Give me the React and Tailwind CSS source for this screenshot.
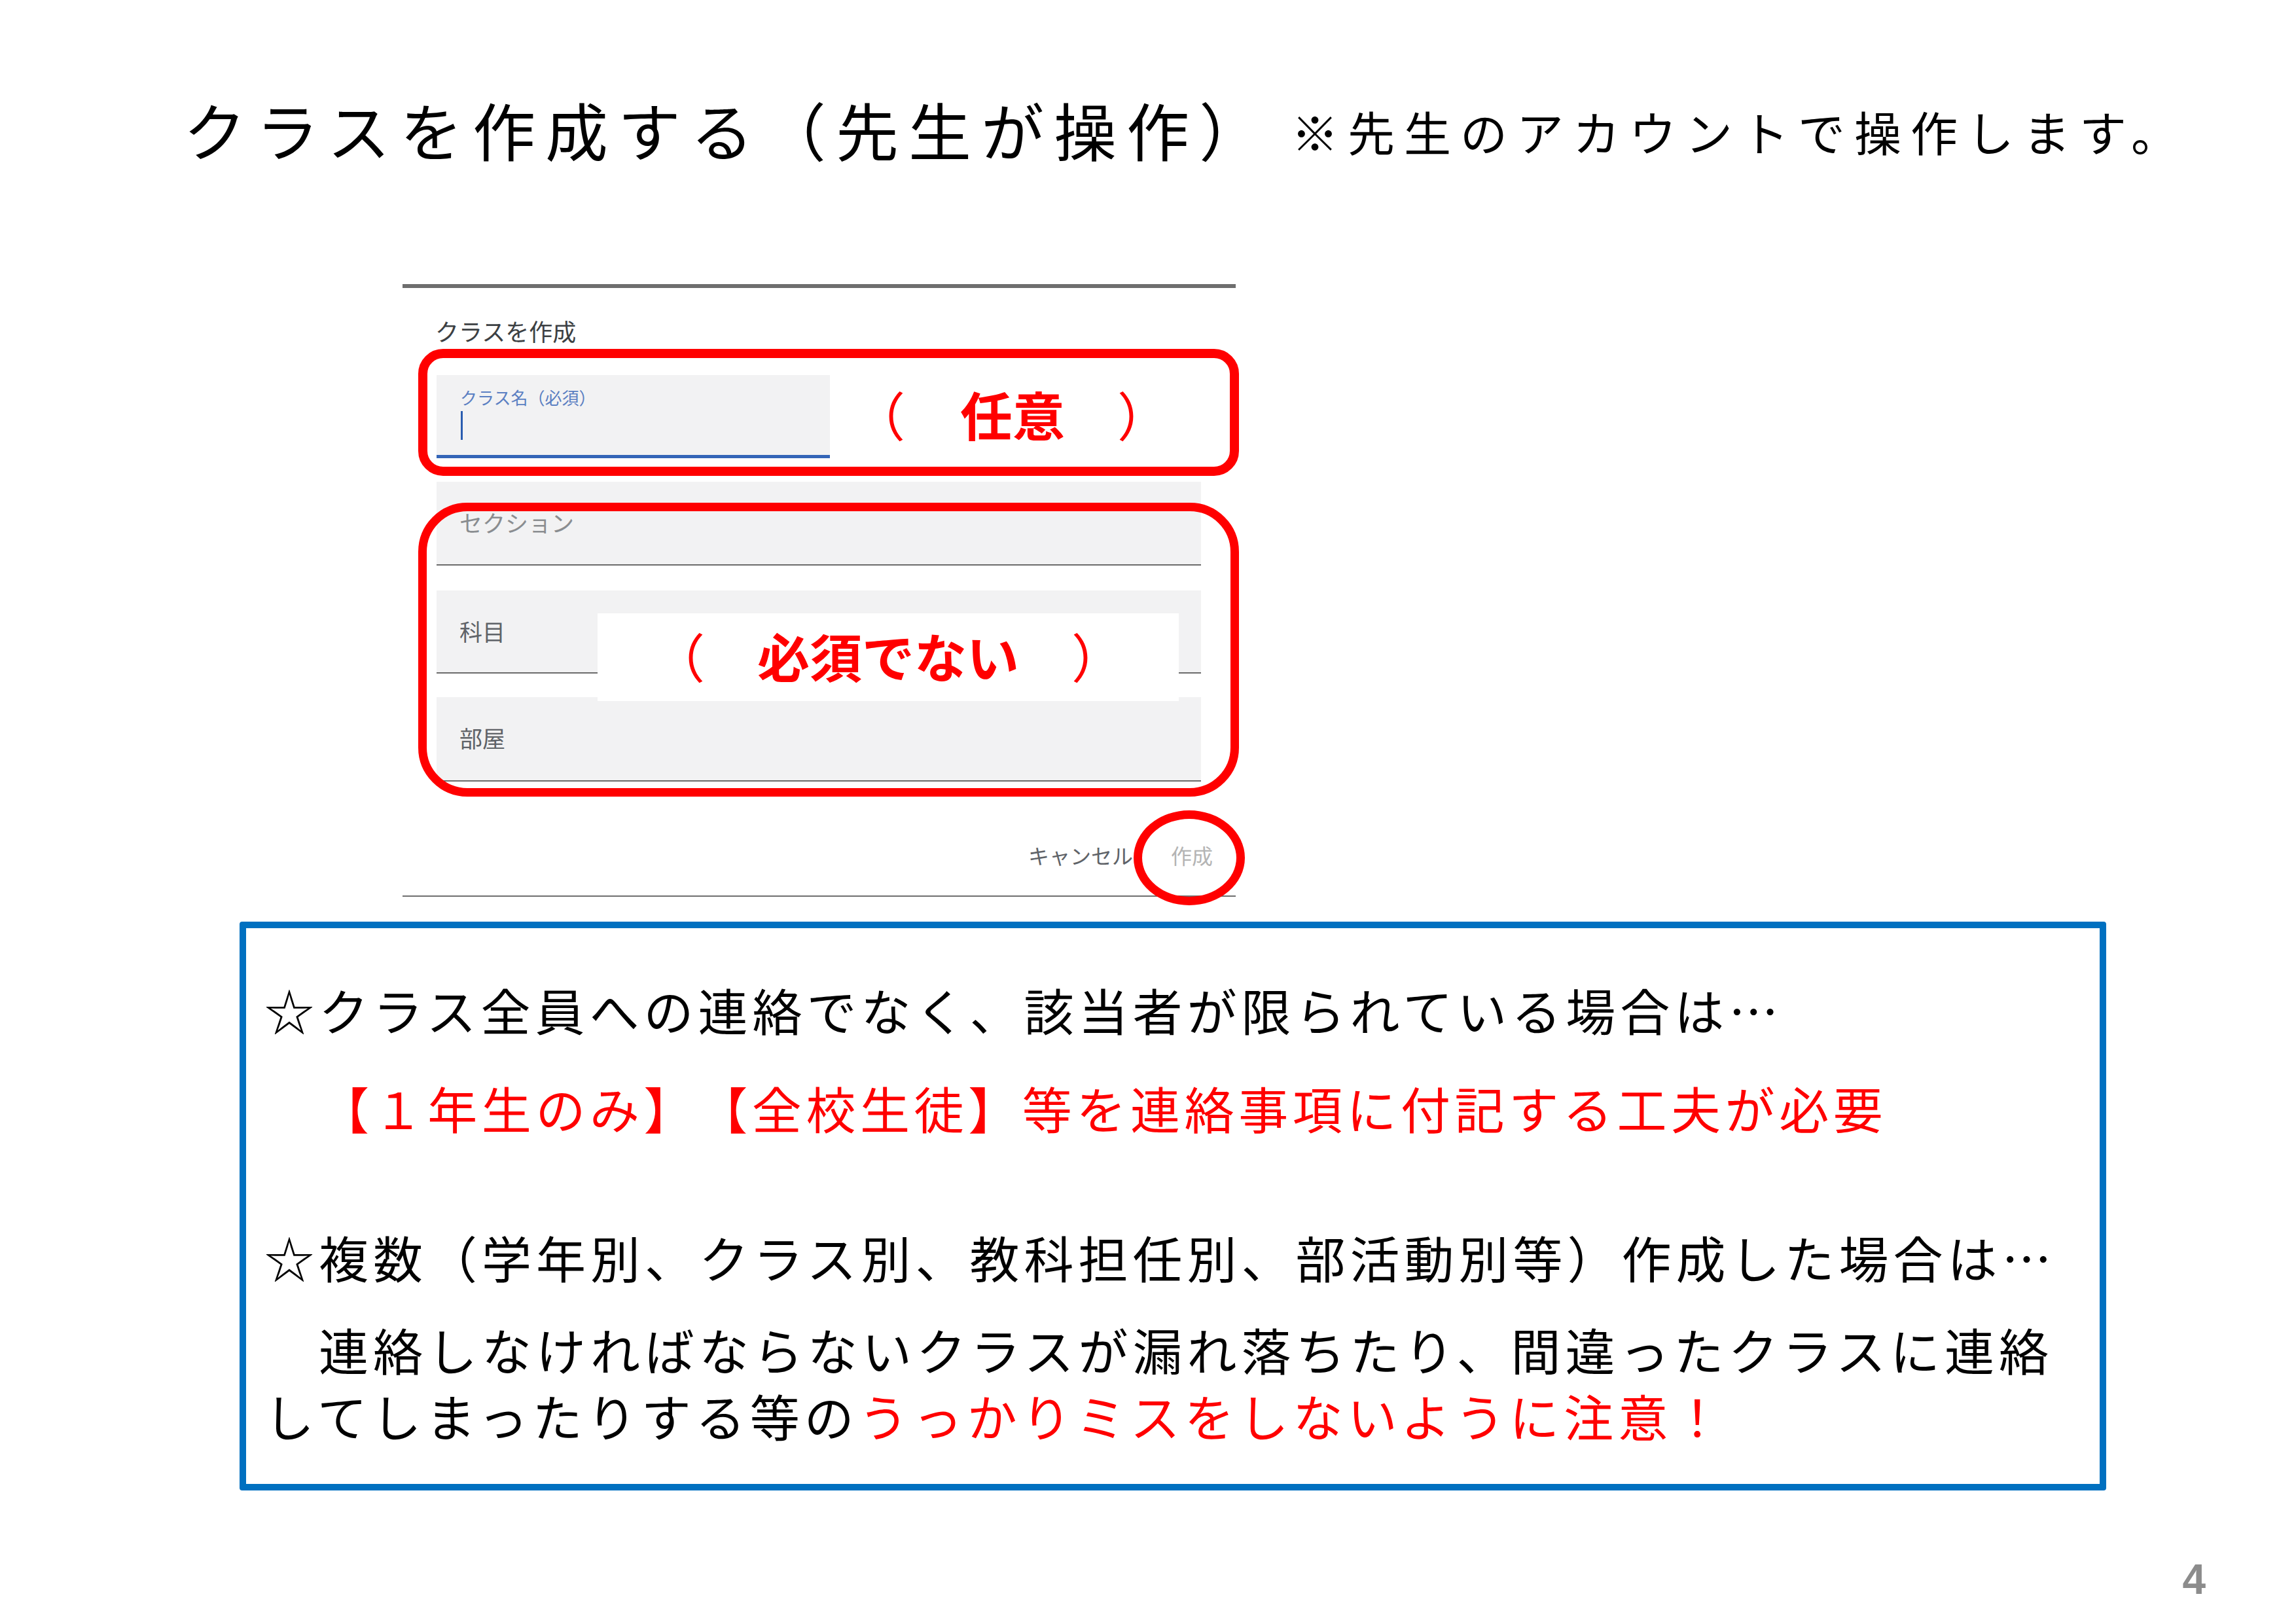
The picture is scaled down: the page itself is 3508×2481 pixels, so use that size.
export default function App() {
  return (
    <div className="w-[3508px] h-[2481px] bg-white overflow-hidden font-['Noto_Sans_CJK_JP',sans-serif] text-black [text-spacing-trim:space-all]">
      {/* Header */}
      <header className="flex items-start pl-[280px] pt-[149px]">
        <h1 className="text-[96px] leading-none tracking-[15px] font-normal whitespace-nowrap">
          クラスを作成する（先生が操作）
        </h1>
        <p className="ml-[30px] mt-[15px] text-[72px] leading-none tracking-[14px] whitespace-nowrap">
          ※先生のアカウントで操作します。
        </p>
      </header>

      {/* Dialog screenshot */}
      <div className="relative ml-[615px] mt-[189px] w-[1273px] border-t-[6px] border-b-2 border-[#6e6e6e] bg-white">
        <div className="pl-[52px] pt-[47px]">
          <div className="text-[36px] leading-none text-[#3c4043] -ml-[2px]">クラスを作成</div>

          <div className="mt-[50px] w-[601px] h-[127px] bg-[#f2f2f3] border-b-[5px] border-[#3465b7] pl-[36px] pt-[21px]">
            <div className="text-[26px] leading-none text-[#5b7fc2]">クラス名（必須）</div>
            <div className="mt-[8px] ml-[1px] w-[3px] h-[44px] bg-[#2a5db0]" />
          </div>

          <div className="mt-[36px] w-[1168px] h-[128px] bg-[#f2f2f3] border-b-2 border-[#6b6b6b] pl-[35px] pt-[44px] text-[35px] leading-none text-[#8a8d90]">
            セクション
          </div>
          <div className="mt-[38px] w-[1168px] h-[127px] bg-[#f2f2f3] border-b-2 border-[#6b6b6b] pl-[35px] pt-[44px] text-[35px] leading-none text-[#5f6368]">
            科目
          </div>
          <div className="mt-[36px] w-[1168px] h-[129px] bg-[#f2f2f3] border-b-2 border-[#6b6b6b] pl-[35px] pt-[44px] text-[35px] leading-none text-[#5f6368]">
            部屋
          </div>

          <div className="mt-[96px] pb-[46px] pr-[35px] flex justify-end gap-[58px] text-[32px] leading-none">
            <span className="text-[#5f6368]">キャンセル</span>
            <span className="text-[#b4b4b4]">作成</span>
          </div>
        </div>

        {/* Annotations */}
        <div className="absolute left-[24px] top-[93px] w-[1254px] h-[194px] border-[14px] border-[#ff0000] rounded-[38px]" />
        <div className="absolute left-[688px] top-[151px] flex text-[80px] leading-none text-[#ff0000] whitespace-nowrap">
          <span>（</span>
          <span className="ml-[84px] font-bold">任意</span>
          <span className="ml-[80px]">）</span>
        </div>

        <div className="absolute left-[24px] top-[328px] w-[1254px] h-[449px] border-[13px] border-[#ff0000] rounded-[75px]" />
        <div className="absolute left-[298px] top-[497px] w-[888px] h-[134px] bg-white flex items-center justify-center pb-[8px]">
          <div className="flex text-[80px] leading-none text-[#ff0000] whitespace-nowrap">
            <span>（　</span>
            <span className="font-bold">必須でない</span>
            <span>　）</span>
          </div>
        </div>

        <div className="absolute left-[1117px] top-[798px] w-[170px] h-[145px] border-[13px] border-[#ff0000] rounded-[50%]" />
      </div>

      {/* Blue note box */}
      <div className="ml-[366px] mt-[38px] w-[2852px] h-[869px] border-[10px] border-[#0070c0] rounded-[4px] pl-[28px] pt-[86px] text-[76px] leading-none tracking-[7px] whitespace-nowrap">
        <p>☆クラス全員への連絡でなく、該当者が限られている場合は…</p>
        <p className="mt-[74px] pl-[84px] text-[#ff0000] tracking-[6.6px]">【１年生のみ】【全校生徒】等を連絡事項に付記する工夫が必要</p>
        <p className="mt-[152px]">☆複数（学年別、クラス別、教科担任別、部活動別等）作成した場合は…</p>
        <p className="mt-[65px]">　連絡しなければならないクラスが漏れ落ちたり、間違ったクラスに連絡</p>
        <p className="mt-[25px]">
          してしまったりする等の<span className="text-[#ff0000]">うっかりミスをしないように注意！</span>
        </p>
      </div>

      {/* Page number */}
      <div className="mt-[104px] flex justify-end pr-[138px]">
        <span className="font-['Liberation_Sans',sans-serif] font-bold text-[64px] leading-none text-[#8c8c8c]">4</span>
      </div>
    </div>
  );
}
